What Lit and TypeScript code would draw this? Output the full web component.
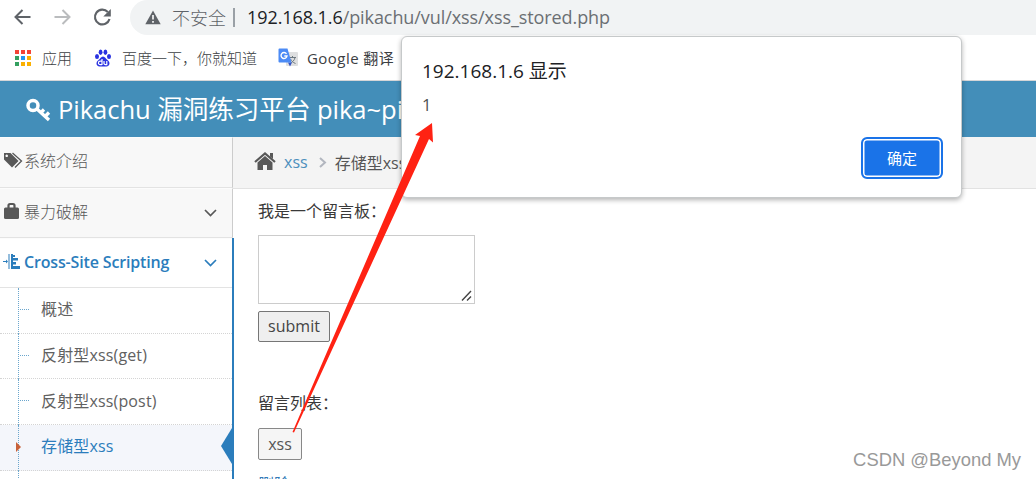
import { LitElement, html, css, svg } from "lit";
import { customElement, property } from "lit/decorators.js";
import { classMap } from "lit/directives/class-map.js";

const chevron = svg`<path d="M1 1l5.5 5.5L12 1" fill="none" stroke="currentColor" stroke-width="1.7"/>`;

@customElement("browser-bar")
class BrowserBar extends LitElement {
  static styles = css`
    :host {
      display: block;
      height: 80px;
      border-bottom: 1px solid #d5d6d8;
      background: #fff;
      font-family: "Open Sans", "Noto Sans CJK SC", sans-serif;
    }
    .toolbar {
      display: flex;
      height: 35px;
    }
    .nav {
      display: flex;
      width: 130px;
      box-sizing: border-box;
      padding: 7px 0 0 12px;
      gap: 20px;
    }
    .address {
      display: flex;
      align-items: center;
      flex: 1;
      padding-left: 15px;
      border-radius: 18px 0 0 18px;
      background: #f1f3f4;
      white-space: nowrap;
      font-size: 18px;
    }
    .insecure {
      width: 54px;
      margin: -2px 0 0 11px;
      color: #5f6368;
      font-size: 18px;
      font-weight: 300;
    }
    .divider {
      width: 2px;
      height: 19px;
      margin: 0 12px 0 7px;
      background: #9aa0a6;
    }
    .url {
      margin-top: -2px;
      color: #6b6f73;
      letter-spacing: -0.08px;
    }
    .host {
      color: #202124;
    }
    .bookmarks {
      display: flex;
      height: 45px;
      padding-left: 14px;
      align-items: center;
      color: #3c4043;
      font-size: 15px;
      font-weight: 300;
      white-space: nowrap;
    }
    .bookmarks svg {
      margin-right: 10px;
    }
    .mark {
      display: flex;
      align-items: center;
    }
    .apps {
      width: 80px;
    }
    .baidu {
      width: 184px;
    }
    .google {
      font-weight: 400;
      letter-spacing: 0.45px;
    }
    .google svg {
      margin-right: 9px;
    }
  `;

  render() {
    const colors = ["#f44336", "#f44336", "#f44336", "#34a060", "#2196f3", "#fbb000", "#34a060", "#fbb000", "#fbb000"];
    return html`
      <div class="toolbar">
        <div class="nav">
          <svg width="20" height="20" viewBox="0 0 20 20" fill="none" stroke="#5f6368" stroke-width="2">
            <path d="M18.500 10H4M10.500 3L3.500 10l7 7" />
          </svg>
          <svg width="20" height="20" viewBox="0 0 20 20" fill="none" stroke="#babcbe" stroke-width="2">
            <path d="M2.500 10H17M10.500 3l7 7-7 7" />
          </svg>
          <svg width="20" height="20" viewBox="0 0 20 20" fill="none">
            <path d="M15.800 5A7.400 7.400 0 1 0 17.500 12" stroke="#5f6368" stroke-width="2.200" />
            <path d="M18.800 2v7.500h-7.500z" fill="#5f6368" />
          </svg>
        </div>
        <div class="address">
          <svg width="16" height="15" viewBox="0 0 16 15">
            <path d="M8 .5L15.700 14.300H.3z" fill="#5f6368" />
            <path d="M8 5v4.500M8 11v1.800" stroke="#fff" stroke-width="1.600" />
          </svg>
          <span class="insecure">不安全</span>
          <span class="divider"></span>
          <span class="url"><span class="host">192.168.1.6</span>/pikachu/vul/xss/xss_stored.php</span>
        </div>
      </div>
      <div class="bookmarks">
        <div class="mark apps">
          <svg width="18" height="18" viewBox="0 0 18 18">
            ${colors.map((c, i) => svg`<rect x=${1 + (i % 3) * 6} y=${Math.floor(i / 3) * 6 + 1} width="4" height="4" fill=${c} />`)}
          </svg>
          应用
        </div>
        <div class="mark baidu">
          <svg width="18" height="18" viewBox="0 0 18 18" fill="#2932e1">
            <ellipse cx="3" cy="7.500" rx="2" ry="2.600" />
            <ellipse cx="6.600" cy="3.300" rx="1.900" ry="2.700" />
            <ellipse cx="11.400" cy="3.300" rx="1.900" ry="2.700" />
            <ellipse cx="15" cy="7.500" rx="2" ry="2.600" />
            <path d="M9 7.500c2 0 2.700 2.300 4.500 3.600 3.400 2.600 2 6.400-1 6.400H5.500c-3 0-4.400-3.800-1-6.400C6.300 9.800 7 7.500 9 7.500z" />
            <g fill="none" stroke="#fff" stroke-width="1.200">
              <path d="M8 10v6M8 12.200H6.200a1.600 1.600 0 0 0 0 3.500H8M10 12v2.500c0 1.200 1.200 1.200 2.800 1.200V12" />
            </g>
          </svg>
          百度一下，你就知道
        </div>
        <div class="mark google">
          <svg width="20" height="19" viewBox="0 0 20 19">
            <rect x="8" y="4" width="12" height="14" rx="1" fill="#dedfe0" />
            <path d="M11 9.500h7M14.500 8v1.500M17 9.500c-.5 3-2.500 4.500-5 6M12.500 11c1 2 2.500 3.500 5 4.500" stroke="#6d7880" fill="none" />
            <path d="M10 14.500h4l-2 4z" fill="#3453c4" />
            <path d="M1.500.5h8l4 14H1.500a1 1 0 0 1-1-1v-12a1 1 0 0 1 1-1z" fill="#4c8bf5" />
            <path d="M8.500 5.800A3 3 0 1 0 9 8H6.300" fill="none" stroke="#fff" stroke-width="1.400" />
          </svg>
          Google 翻译
        </div>
      </div>
    `;
  }
}

@customElement("side-menu")
class SideMenu extends LitElement {
  static styles = css`
    :host {
      display: flex;
      flex-direction: column;
      width: 234px;
      height: 342px;
      overflow: hidden;
      color: #585858;
      font: 300 16px "Open Sans", "Noto Sans CJK SC", sans-serif;
    }
    .item {
      display: flex;
      align-items: center;
      width: 232px;
      height: 50px;
      flex: none;
      box-sizing: border-box;
      padding: 0 15px 0 3px;
      border-top: 1px solid #fcfcfc;
      border-bottom: 1px solid #e3e3e3;
      background: #f8f8f8;
      white-space: nowrap;
    }
    .item svg.icon {
      margin: -5px 1px 0 0;
      flex: none;
    }
    .item.gray {
      width: 233px;
      border-right: 1px solid #ccc;
    }
    .item.first {
      height: 51px;
    }
    .label {
      flex: 1;
      padding-bottom: 5px;
    }
    .item.active {
      background: #fff;
      color: #2b7dbc;
      font-weight: 600;
      letter-spacing: -0.16px;
    }
    .active .label {
      padding-bottom: 3px;
    }
    .item.active svg.icon {
      margin-top: -3px;
    }
    .open {
      flex: 1;
      border-right: 2px solid #2b7dbc;
      background: #fff;
    }
    .sub {
      position: relative;
      display: flex;
      align-items: center;
      height: 45.700px;
      box-sizing: border-box;
      padding: 0 0 4px 41px;
      border-bottom: 1px dotted #d4d4d4;
      color: #616161;
      font-weight: 400;
      letter-spacing: 0.15px;
    }
    .sub::before {
      content: "";
      position: absolute;
      left: 18px;
      top: 0;
      bottom: -1px;
      border-left: 1px dotted #6ba6cd;
    }
    .sub::after {
      content: "";
      position: absolute;
      left: 20px;
      top: 21px;
      width: 9px;
      border-top: 1px dotted #6ba6cd;
    }
    .sub.current {
      background: #f4f6fb;
      color: #2b7dbc;
    }
    .sub.current::after {
      left: 16px;
      top: 17px;
      width: 0;
      border: 5px solid transparent;
      border-left-color: #c86139;
      border-right: 0;
    }
    .pointer {
      position: absolute;
      right: 0;
      top: 3px;
    }
  `;

  @property({ type: Array }) entries: string[] = [];

  render() {
    return html`
      <div class="item gray first">
        <svg class="icon" width="20" height="16" viewBox="0 0 20 16" fill="#585858">
          <path fill-rule="evenodd" d="M1 1h6.500l8 8-6.500 6.500-8-8zM3.700 2.500a1.300 1.300 0 1 0 .01 0z" />
          <path d="M9.500 1l9 8-6.500 6.500" fill="none" stroke="#585858" stroke-width="1.300" />
        </svg>
        <span class="label">系统介绍</span>
      </div>
      <div class="item gray">
        <svg class="icon" width="20" height="18" viewBox="0 0 20 18">
          <path d="M5.500 6V3.500q0-1.500 1.500-1.500h3q1.500 0 1.500 1.500V6" fill="none" stroke="#585858" stroke-width="2.200" />
          <rect x="1" y="5.500" width="15" height="11.500" rx="1.500" fill="#585858" />
        </svg>
        <span class="label">暴力破解</span>
        <svg width="13" height="9" viewBox="0 0 13 9">${chevron}</svg>
      </div>
      <div class="open">
        <div class="item active">
          <svg class="icon" width="20" height="16" viewBox="0 0 20 16" fill="#2b7dbc">
            <path d="M0 7h3V5.500L5 7.500l-2 2V8H0zM5.500 0h1v15h-1zM8 0h2v15H8zM9 1h3v2H9zM9 4h6v2.500H9zM9 8h4v2.500H9zM9 12h8v3H9z" />
          </svg>
          <span class="label">Cross-Site Scripting</span>
          <svg width="13" height="9" viewBox="0 0 13 9">${chevron}</svg>
        </div>
        ${this.entries.map((entry, i) => {
          const current = i === 3;
          return html`
            <div class=${classMap({ sub: true, current })}>
              ${entry}
              ${current
                ? html`<svg class="pointer" width="11" height="36" viewBox="0 0 11 36"><path d="M11 0v36L0 18z" fill="#2b7dbc" /></svg>`
                : ""}
            </div>
          `;
        })}
      </div>
    `;
  }
}

@customElement("alert-dialog")
class AlertDialog extends LitElement {
  static styles = css`
    :host {
      display: flex;
      flex-direction: column;
      box-sizing: border-box;
      width: 561px;
      height: 162px;
      padding: 21px 18px 18px 20px;
      border: 1px solid #c6c9ca;
      border-radius: 6px;
      background: #fff;
      box-shadow: 0 2px 5px rgba(0, 0, 0, 0.3);
      font-family: "Open Sans", "Noto Sans CJK SC", sans-serif;
    }
    .title {
      color: #202124;
      font-size: 19px;
      line-height: 26px;
    }
    .message {
      margin-top: 10px;
      color: #4c4f52;
      font-size: 16.500px;
      line-height: 22px;
    }
    button {
      align-self: flex-end;
      flex: none;
      width: 82px;
      height: 42px;
      margin-top: 21px;
      padding-bottom: 2px;
      border: 2px solid #1a73e8;
      border-radius: 6px;
      outline: 0;
      background: #1a73e8;
      box-shadow: inset 0 0 0 1.500px #fff;
      color: #fff;
      font: 400 15px "Noto Sans CJK SC", sans-serif;
    }
  `;

  render() {
    return html`
      <div class="title">192.168.1.6 显示</div>
      <div class="message">1</div>
      <button>确定</button>
    `;
  }
}

@customElement("app-root")
class AppRoot extends LitElement {
  static styles = css`
    :host {
      position: relative;
      display: block;
      width: 1036px;
      height: 479px;
      overflow: hidden;
      background: #fff;
      color: #393939;
      font: 400 16px "Open Sans", "Noto Sans CJK SC", sans-serif;
    }
    .navbar {
      display: flex;
      align-items: center;
      height: 56px;
      box-sizing: border-box;
      padding: 0 0 3px 26px;
      background: #438eb9;
      color: #fff;
      font-size: 25.600px;
      letter-spacing: -0.07px;
      white-space: nowrap;
    }
    .navbar svg {
      margin: 4px 7px 0 0;
    }
    .body {
      display: flex;
    }
    main {
      flex: 1;
      margin-left: -1px;
    }
    .crumbs {
      display: flex;
      align-items: center;
      height: 52px;
      box-sizing: border-box;
      padding: 0 0 2px 21px;
      border-bottom: 1px solid #e2e2e2;
      background: #f4f4f4;
      color: #555;
    }
    .crumbs a {
      margin: 0 11px 0 8px;
      color: #4c8fbd;
    }
    .crumbs .sep {
      margin: 2px 8px 0 0;
    }
    .content {
      display: flex;
      flex-direction: column;
      align-items: flex-start;
      padding-left: 25px;
    }
    .content p {
      margin: 0;
      height: 24px;
      line-height: 24px;
    }
    .content .prompt {
      padding-top: 10px;
    }
    textarea {
      box-sizing: border-box;
      width: 217px;
      height: 69px;
      margin: 12px 0 7px;
      border: 1px solid #ccc;
      resize: none;
    }
    .field {
      position: relative;
      display: flex;
    }
    .grip {
      position: absolute;
      right: 3px;
      bottom: 10px;
    }
    .submit {
      height: 31px;
      width: 72px;
      padding: 0 0 2px;
      border: 1px solid #767676;
      border-radius: 2px;
      background: #efefef;
      color: #444;
      font: inherit;
    }
    .content .list {
      margin-top: 49px;
    }
    .message {
      height: 32px;
      width: 44px;
      box-sizing: border-box;
      margin-top: 13px;
      border: 1px solid #888;
      border-radius: 2px;
      background: #f5f5f5;
      color: #555;
      line-height: 30px;
      text-align: center;
    }
    .delete {
      margin-top: 11px;
      color: #337ab7;
    }
    alert-dialog {
      position: absolute;
      left: 401px;
      top: 36px;
    }
    .arrow {
      position: absolute;
      left: 0;
      top: 0;
    }
    .watermark {
      position: absolute;
      right: 15px;
      bottom: 8px;
      color: #999;
      font: 18.400px "Liberation Sans", sans-serif;
    }
  `;

  render() {
    return html`
      <browser-bar></browser-bar>
      <div class="navbar">
        <svg width="25" height="24" viewBox="0 0 25 24" fill="none" stroke="#fff">
          <circle cx="7" cy="7.500" r="5" stroke-width="3.500" />
          <path d="M11 11l12 11M19 18.500l4-4M15 14.500l3-3" stroke-width="3.300" />
        </svg>
        Pikachu 漏洞练习平台 pika~pi
      </div>
      <div class="body">
        <side-menu .entries=${["概述", "反射型xss(get)", "反射型xss(post)", "存储型xss", ""]}></side-menu>
        <main>
          <div class="crumbs">
            <svg width="22" height="19" viewBox="0 0 22 19" fill="#585858">
              <path d="M3.500 10.500L11 4l7.500 6.500V18H13v-5H9v5H3.500z" />
              <path d="M1 10l10-8.500L21 10" fill="none" stroke="#585858" stroke-width="2.200" />
              <path d="M16 1h3v6l-3-2.500z" />
            </svg>
            <a>xss</a>
            <svg class="sep" width="8" height="11" viewBox="0 0 8 11"><path d="M1 1l5 4.500L1 10" fill="none" stroke="#b2b6bf" stroke-width="2" /></svg>
            <span>存储型xss</span>
          </div>
          <div class="content">
            <p class="prompt">我是一个留言板：</p>
            <div class="field">
              <textarea></textarea>
              <svg class="grip" width="11" height="11" viewBox="0 0 11 11"><path d="M1 10.500L10 1M6 10.500l4-4" stroke="#444" stroke-width="1.400" /></svg>
            </div>
            <button class="submit">submit</button>
            <p class="list">留言列表：</p>
            <div class="message">xss</div>
            <a class="delete">删除</a>
          </div>
        </main>
      </div>
      <alert-dialog></alert-dialog>
      <svg class="arrow" width="1036" height="479" viewBox="0 0 1036 479">
        <path d="M432 123L415 135l5 1L292.500 432l1.500 .5L429 139l4 3.500z" fill="#ff2213" />
      </svg>
      <div class="watermark">CSDN @Beyond My</div>
    `;
  }
}
